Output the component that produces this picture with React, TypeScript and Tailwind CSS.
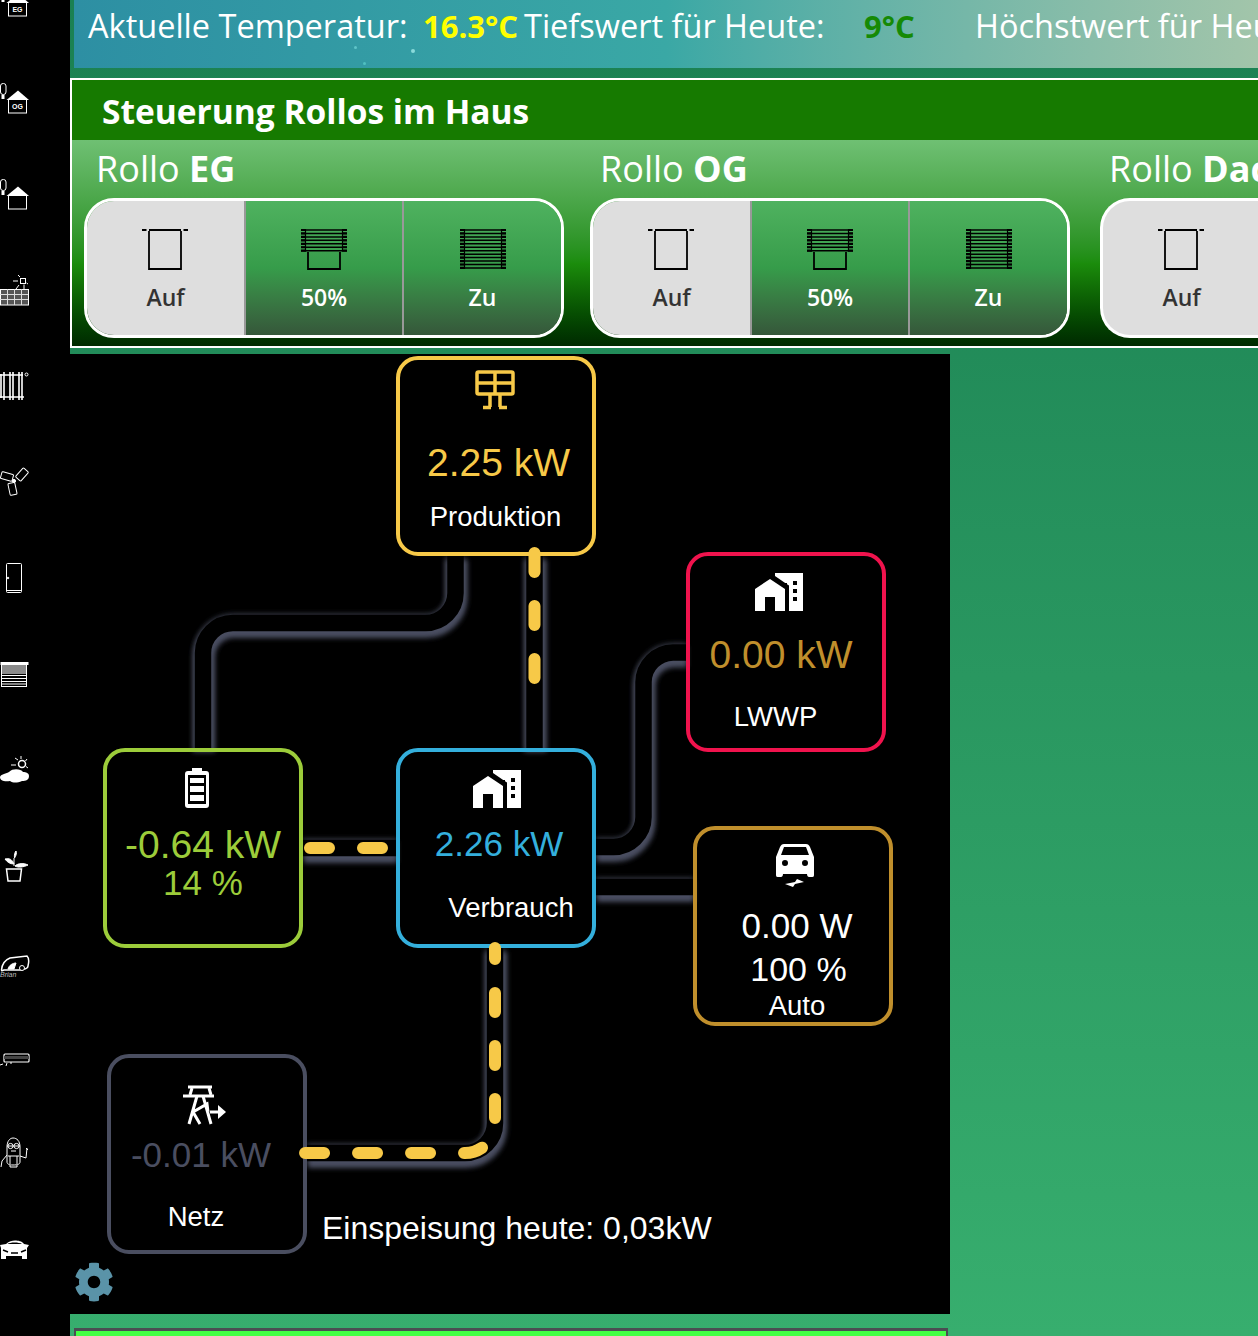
import { FaCog } from "react-icons/fa";

const UI = "font-['Open_Sans',sans-serif]";
const ARIAL = "font-['Liberation_Sans',Arial,sans-serif]";

const LINES = [
  "M455.5 556V593A30 30 0 0 1 425.5 623H233A30 30 0 0 0 203 653V748",
  "M534.5 556V748",
  "M303 848H396",
  "M495 948V1123A30 30 0 0 1 465 1153H307",
  "M596 847H613A30 30 0 0 0 643.5 817V682A30 30 0 0 1 673 652.5H686",
  "M596 887H693",
];

const DASHES = [
  { d: "M534.5 553V680", offset: 0 },
  { d: "M310 848H390", offset: 0 },
  { d: "M495 948V1123A30 30 0 0 1 465 1153H305", offset: 8 },
];

function SideIcon({ children, dy = 0 }: { children: React.ReactNode; dy?: number }) {
  return (
    <div className="flex items-center shrink-0 h-[96px]">
      <svg width="30" height="40" viewBox={`0 ${dy} 30 40`} fill="none" stroke="white" strokeWidth="1">
        {children}
      </svg>
    </div>
  );
}

function Bulb() {
  return (
    <>
      <rect x="0.5" y="3.5" width="5.5" height="11" rx="2.5" />
      <rect x="1.5" y="15" width="3" height="4" fill="white" stroke="none" />
    </>
  );
}

function House({ label }: { label?: string }) {
  return (
    <>
      <path d="M6.5 20L18 10.5L29 20Z" fill="white" stroke="none" />
      <rect x="8.5" y="19.5" width="18" height="13.5" />
      {label && (
        <text x="17.5" y="29" fontSize="7" fontWeight="700" fill="white" stroke="none" textAnchor="middle" fontFamily="Liberation Sans">
          {label}
        </text>
      )}
    </>
  );
}

function Sidebar() {
  return (
    <div className="w-[70px] h-[1380px] shrink-0 bg-black flex flex-col mt-[-44px]">
      <SideIcon dy={1}><Bulb /><House label="EG" /></SideIcon>
      <SideIcon><Bulb /><House label="OG" /></SideIcon>
      <SideIcon><Bulb /><House /></SideIcon>
      <SideIcon>
        <rect x="0.5" y="17.5" width="28" height="15.5" fill="#555" />
        <path d="M0 22.5H28M0 27.5H28M7.5 17V33M14.5 17V33M21.5 17V33" stroke="#ddd" />
        <rect x="20.5" y="6.5" width="5" height="5" />
        <path d="M13 9H18M18 3L20 5M16 17L19 13M24 17V12.5M28 12L26.5 11" />
      </SideIcon>
      <SideIcon dy={3}>
        <path d="M1 9V33M4 7V35M10 7V35M13 7V35M19 7V35M22 7V35M0 10H23M0 32H24" strokeWidth="1.6" />
        <circle cx="26.5" cy="9.5" r="1.5" />
      </SideIcon>
      <SideIcon dy={1}>
        <rect x="1" y="10" width="12" height="7" rx="1" transform="rotate(15 7 13.5)" />
        <rect x="16" y="8" width="12" height="7" rx="1" transform="rotate(-48 22 11.5)" />
        <rect x="9" y="20" width="7" height="12" rx="1" transform="rotate(-12 12 26)" />
        <circle cx="14" cy="18" r="1.6" fill="white" />
      </SideIcon>
      <SideIcon dy={2}>
        <rect x="6.5" y="5.5" width="15" height="29" rx="1" />
        <path d="M7 32.5H21" />
        <circle cx="8" cy="20" r="0.8" fill="white" />
      </SideIcon>
      <SideIcon dy={2}>
        <path d="M0.5 9.5H28.5" strokeWidth="3" />
        <rect x="1" y="11" width="26" height="9" fill="#8a8a8a" stroke="none" />
        <path d="M1.5 10V32.5M26.5 10V32.5M1 32.5H27M1 21.5H27M1 24.5H27M1 27.5H27M1 30H27" />
      </SideIcon>
      <SideIcon>
        <path d="M0 25C1 22 5 22 9 20C13 16 21 17 23 20C26 20 29 21 29 24C29 28 26 29 22 29C17 31 13 31 10 29C5 30 0 29 0 25Z" fill="white" stroke="none" />
        <circle cx="22" cy="12" r="3.5" strokeWidth="1.5" />
        <path d="M11 13H16M15 6L18 8M21 4V7M27 7L25.5 9M28 16L26 14.5" />
      </SideIcon>
      <SideIcon dy={3}>
        <path d="M14 21V13M14 19C10 19 7 17 5 14C9 13 12 14 14 19ZM14.5 13C14 10 15 7 16 6C17 8 16 11 14.5 13ZM15 21C18 18 24 18 28 20C24 22 18 23 15 21Z" fill="white" />
        <path d="M6.5 24H21.5L20 36H8Z" strokeWidth="1.5" />
      </SideIcon>
      <SideIcon dy={2}>
        <path d="M1.5 28C2 22 5 18 10 16L27 14C29 16 29 20 28 24C28 27 25 27 21 28H4C2 29 1.5 29 1.5 28Z" strokeWidth="1.5" />
        <path d="M8 27C9 23 13 21 16 21L14 27Z" fill="white" />
        <circle cx="22" cy="26" r="2.5" fill="black" />
        <text x="0" y="35" fontSize="7" fontStyle="italic" fill="#bbb" stroke="none" fontFamily="Liberation Sans">Brian</text>
      </SideIcon>
      <SideIcon dy={1}>
        <rect x="4" y="15" width="25" height="8" rx="1" strokeWidth="1.2" />
        <path d="M4 18.5H29" strokeWidth="3" stroke="#444" />
        <path d="M3 25L0 26M7 24L6 27M10 24H12" />
      </SideIcon>
      <SideIcon dy={2}>
        <path d="M7 13C7 7 10 4 13 4C17 4 20 7 20 13V28C20 30 18 31 13 31C9 31 7 30 7 28Z" />
        <circle cx="10.5" cy="12" r="2.6" />
        <circle cx="16.5" cy="12" r="2.6" />
        <path d="M7 12H20M8 22H19M10 22V30M17 22V30M11 17H16" />
        <path d="M7 21L2 27L1 33M20 22L26 24L27 14M26 14L28 16" />
        <path d="M10 31V33H17V31" />
      </SideIcon>
      <SideIcon dy={3}>
        <path d="M0 16L6 15C9 12 12 11.5 15 11.5C18 11.5 22 12 24 15L29 16L27 19V30H22V27H6V30H1V19Z" fill="white" stroke="none" />
        <path d="M7.5 15C10 13 19 13 22 15Z" fill="black" stroke="none" />
        <path d="M3 21L8 23M26 21L21 23M11 24H18" stroke="black" strokeWidth="1.5" />
      </SideIcon>
      <SideIcon>
        <path d="M8 20H29" strokeWidth="2" />
      </SideIcon>
    </div>
  );
}

function Open() {
  return (
    <svg width="46" height="42" viewBox="0 0 46 42" fill="none" stroke="#000" strokeWidth="1.8" className="ml-[-2px]">
      <path d="M0 1H4.5M7 1H39M41.5 1H46" />
      <path d="M7 2V40H39V2" />
    </svg>
  );
}

function Slats({ n }: { n: number }) {
  const lines = Array.from({ length: n }).map((_, i) => 1 + i * 3.45);
  return (
    <>
      {lines.map((y) => (
        <g key={y}>
          <path d={`M0 ${y}H46`} strokeWidth="1.5" />
          <path d={`M0 ${y}H4M42 ${y}H46`} strokeWidth="2.2" />
        </g>
      ))}
      <path d={`M4.5 0V${lines[n - 1] + 1}M41.5 0V${lines[n - 1] + 1}`} strokeWidth="1.2" />
    </>
  );
}

function Half() {
  return (
    <svg width="46" height="42" viewBox="0 0 46 42" fill="none" stroke="#000" strokeWidth="1.8">
      <Slats n={7} />
      <path d="M7 23V40H39V23" />
    </svg>
  );
}

function Closed() {
  return (
    <svg width="46" height="42" viewBox="0 0 46 42" fill="none" stroke="#000" strokeWidth="1.8">
      <Slats n={12} />
    </svg>
  );
}

function RolloGroup() {
  const active = "bg-gradient-to-b from-[#4fb25f] via-[#369c4a] to-[#35573a] text-white";
  const label = "mt-[11px] text-[23px] leading-[30px] font-semibold";
  return (
    <div className="flex h-[140px] w-[480px] shrink-0 rounded-[30px] border-[3px] border-white overflow-hidden">
      <div className="w-[159px] bg-[#dedede] text-[#333] flex flex-col items-center pt-[28px] border-r-2 border-[#999]">
        <Open />
        <div className={label}>Auf</div>
      </div>
      <div className={`w-[158px] flex flex-col items-center pt-[28px] border-r-2 border-[#999] ${active}`}>
        <Half />
        <div className={label}>50%</div>
      </div>
      <div className={`flex-1 flex flex-col items-center pt-[28px] ${active}`}>
        <Closed />
        <div className={label}>Zu</div>
      </div>
    </div>
  );
}

function RolloPanel() {
  return (
    <div className={`mt-[10px] h-[270px] border-y-2 border-l-2 border-white ${UI} overflow-hidden`}>
      <div className="h-[60px] bg-[#167a00] flex items-center pl-[30px] pt-[2px] text-[33.5px] font-bold text-white whitespace-nowrap">
        Steuerung Rollos im Haus
      </div>
      <div className="h-[206px] bg-gradient-to-b from-[#6fc073] via-[#1b8c0c] via-60% to-[#002a00] pl-[12px] overflow-hidden">
        <div className="flex text-[36px] leading-[58px] text-white font-medium whitespace-nowrap">
          <div className="w-[504px] shrink-0 pl-[12px]">Rollo <span className="font-bold">EG</span></div>
          <div className="w-[510px] shrink-0 pl-[12px]">Rollo <span className="font-bold">OG</span></div>
          <div className="shrink-0 pl-[11px]">Rollo <span className="font-bold">Dach</span></div>
        </div>
        <div className="flex">
          <RolloGroup />
          <div className="ml-[26px]"><RolloGroup /></div>
          <div className="ml-[30px] h-[140px] w-[160px] shrink-0 rounded-l-[30px] border-y-[3px] border-l-[3px] border-white bg-[#dedede] text-[#333] flex flex-col items-center pt-[28px]">
            <Open />
            <div className="mt-[11px] text-[23px] leading-[30px] font-semibold">Auf</div>
          </div>
        </div>
      </div>
    </div>
  );
}

function HomeCity({ className }: { className: string }) {
  return (
    <svg className={className} width="48" height="38" viewBox="0 2 24 19" fill="white">
      <path d="M0,21V10L7.5,5L15,10V21H10V14H5V21H0M24,2V21H17V8.27L16,7.61V7H15.09L10,3.5V2H24M21,14H19V16H21V14M21,10H19V12H21V10M21,6H19V8H21V6Z" />
    </svg>
  );
}

function Node({ className, children }: { className: string; children: React.ReactNode }) {
  return (
    <div className={`absolute w-[200px] h-[200px] rounded-[22px] border-[4px] flex flex-col items-center ${className}`}>
      {children}
    </div>
  );
}

function Diagram() {
  return (
    <div className={`relative w-[880px] h-[960px] mt-[6px] shrink-0 bg-black text-white ${ARIAL}`}>
      <svg className="absolute left-[-70px] top-[-354px]" width="1258" height="1336" fill="none">
        <defs>
          <filter id="blurGlow" filterUnits="userSpaceOnUse" x="0" y="0" width="1258" height="1336">
            <feGaussianBlur stdDeviation="2.5" />
          </filter>
        </defs>
        {LINES.map((d) => (
          <g key={d}>
            <path d={d} stroke="#4a4e60" strokeOpacity="0.4" strokeWidth="20" filter="url(#blurGlow)" />
            <path d={d} stroke="#4a4e60" strokeWidth="22" transform="translate(1 4)" filter="url(#blurGlow)" />
            <path d={d} stroke="#000" strokeWidth="16.5" />
          </g>
        ))}
      </svg>

      <Node className="left-[326px] top-[2px] border-[#f7c948] pt-[10px]">
        <svg width="40" height="40" viewBox="0 0 40 40" fill="none" stroke="#f7c948" strokeWidth="3.5" strokeLinejoin="round" className="ml-[-2px]">
          <rect x="2" y="2" width="36" height="22" rx="1.5" />
          <path d="M2 13H38M20 2V24M15 24V37M25 24V37M8 37.5H16M24 37.5H32" />
        </svg>
        <div className="mt-[30px] text-[39px] leading-[46px] text-[#f7c948] ml-[5px] whitespace-nowrap">2.25 kW</div>
        <div className="mt-[14px] text-[27.5px] leading-[34px] ml-[-1px]">Produktion</div>
      </Node>

      <Node className="left-[616px] top-[198px] border-[#f0134d] pt-[17px]">
        <HomeCity className="ml-[-14px]" />
        <div className="mt-[21px] text-[39px] leading-[46px] text-[#c08f2c] ml-[-10px] whitespace-nowrap">0.00 kW</div>
        <div className="mt-[22px] text-[27.5px] leading-[34px] ml-[-21px]">LWWP</div>
      </Node>

      <Node className="left-[33px] top-[394px] border-[#9ccc3a] pt-[16px]">
        <svg width="24" height="40" viewBox="0 0 24 40" className="ml-[-12px]">
          <path d="M7 0H17V3H21A3 3 0 0 1 24 6V37A3 3 0 0 1 21 40H3A3 3 0 0 1 0 37V6A3 3 0 0 1 3 3H7Z M3 7V36H21V7Z" fill="white" fillRule="evenodd" />
          <path d="M5 10H19V15H5ZM5 18H19V24H5ZM5 27H19V33H5Z" fill="white" />
        </svg>
        <div className="mt-[14px] text-[39px] leading-[46px] text-[#9ccc3a] whitespace-nowrap">-0.64 kW</div>
        <div className="mt-[-6px] text-[35px] leading-[42px] text-[#9ccc3a] whitespace-nowrap">14 %</div>
      </Node>

      <Node className="left-[326px] top-[394px] border-[#34afdc] pt-[18px]">
        <HomeCity className="ml-[2px]" />
        <div className="mt-[15px] text-[35px] leading-[42px] text-[#34afdc] ml-[6px] whitespace-nowrap">2.26 kW</div>
        <div className="mt-[26px] text-[27.5px] leading-[34px] ml-[30px]">Verbrauch</div>
      </Node>

      <Node className="left-[623px] top-[472px] border-[#c08f2c] pt-[14px]">
        <svg width="38" height="44" viewBox="0 0 38 44" className="ml-[4px]">
          <path d="M8 0H30C32 0 33 1 34 3L38 13V31C38 33 37 33 35 33H33C32 33 31 32 31 30H7C7 32 6 33 5 33H3C1 33 0 33 0 31V13L4 3C5 1 6 0 8 0ZM8 3L5 11H33L30 3ZM9 16A3 3 0 1 0 9 22A3 3 0 1 0 9 16ZM29 16A3 3 0 1 0 29 22A3 3 0 1 0 29 16Z" fill="white" fillRule="evenodd" />
          <path d="M9 40L19 38L21 35L28 38L19 40L17 43Z" fill="white" />
        </svg>
        <div className="mt-[16px] text-[35px] leading-[44px] ml-[8px] whitespace-nowrap">0.00 W</div>
        <div className="text-[34px] leading-[42px] ml-[11px] whitespace-nowrap">100 %</div>
        <div className="text-[27.5px] leading-[32px] ml-[8px] whitespace-nowrap">Auto</div>
      </Node>

      <Node className="left-[37px] top-[700px] border-[#4a4e60] pt-[26px]">
        <svg width="44" height="42" viewBox="0 0 44 42" fill="none" stroke="white" strokeWidth="3" className="ml-[-6px]">
          <path d="M6 3H30M1 12H32" />
          <path d="M10 4L8 11M27 4L29 11M15 12L7 40M21 12L29 40M11 28L25 20L26 28M11 28L18 40" />
          <path d="M28 28H38" />
          <path d="M36 21L44 28L36 35Z" fill="white" stroke="none" />
        </svg>
        <div className="mt-[8px] text-[35px] leading-[42px] text-[#4a4e60] ml-[-12px] whitespace-nowrap">-0.01 kW</div>
        <div className="mt-[24px] text-[27.5px] leading-[34px] ml-[-22px]">Netz</div>
      </Node>

      <svg className="absolute left-[-70px] top-[-354px]" width="1258" height="1336" fill="none">
        {DASHES.map((l) => (
          <path key={l.d} d={l.d} stroke="#f7c948" strokeWidth="12" strokeLinecap="round" strokeDasharray="19 34" strokeDashoffset={l.offset} />
        ))}
      </svg>

      <div className="absolute left-[252px] top-[854px] text-[32px] leading-[40px] whitespace-nowrap">Einspeisung heute: 0,03kW</div>
      <FaCog className="absolute left-[4px] top-[908px] text-[#5a93a8]" size={40} />
    </div>
  );
}

export default function App() {
  return (
    <div className="w-[1258px] h-[1336px] flex overflow-hidden bg-gradient-to-b from-[#1a8052] to-[#37ae6e]">
      <Sidebar />
      <div className="flex-1 min-w-0 flex flex-col">
        <div className={`relative ml-[4px] h-[68px] shrink-0 bg-gradient-to-r from-[#2d8fa3] via-[#3aa8a5] via-50% to-[#a2c5aa] flex items-center pl-[14px] pb-[16px] text-[32.5px] font-medium text-white whitespace-nowrap overflow-hidden ${UI}`}>
          <span className="w-[335px] shrink-0">Aktuelle Temperatur:</span>
          <span className="w-[101px] shrink-0 font-bold text-[31px] text-[#ffff00]">16.3°C</span>
          <span className="w-[340px] shrink-0">Tiefswert für Heute:</span>
          <span className="w-[111px] shrink-0 font-bold text-[31px] text-[#158a05]">9°C</span>
          <span className="shrink-0">Höchstwert für Heute:</span>
          <span className="absolute left-[280px] top-[46px] w-[3px] h-[3px] rounded-full bg-[#5fc4c8]" />
          <span className="absolute left-[337px] top-[49px] w-[4px] h-[4px] rounded-full bg-[#8adada]" />
          <span className="absolute left-[289px] top-[62px] w-[3px] h-[3px] rounded-full bg-[#50c0c0]" />
        </div>
        <RolloPanel />
        <Diagram />
        <div className="mt-[14px] ml-[4px] w-[874px] h-[8px] border-t-[3px] border-x-[2px] border-[#4a4e52] bg-[#44ff44] shrink-0" />
      </div>
    </div>
  );
}
